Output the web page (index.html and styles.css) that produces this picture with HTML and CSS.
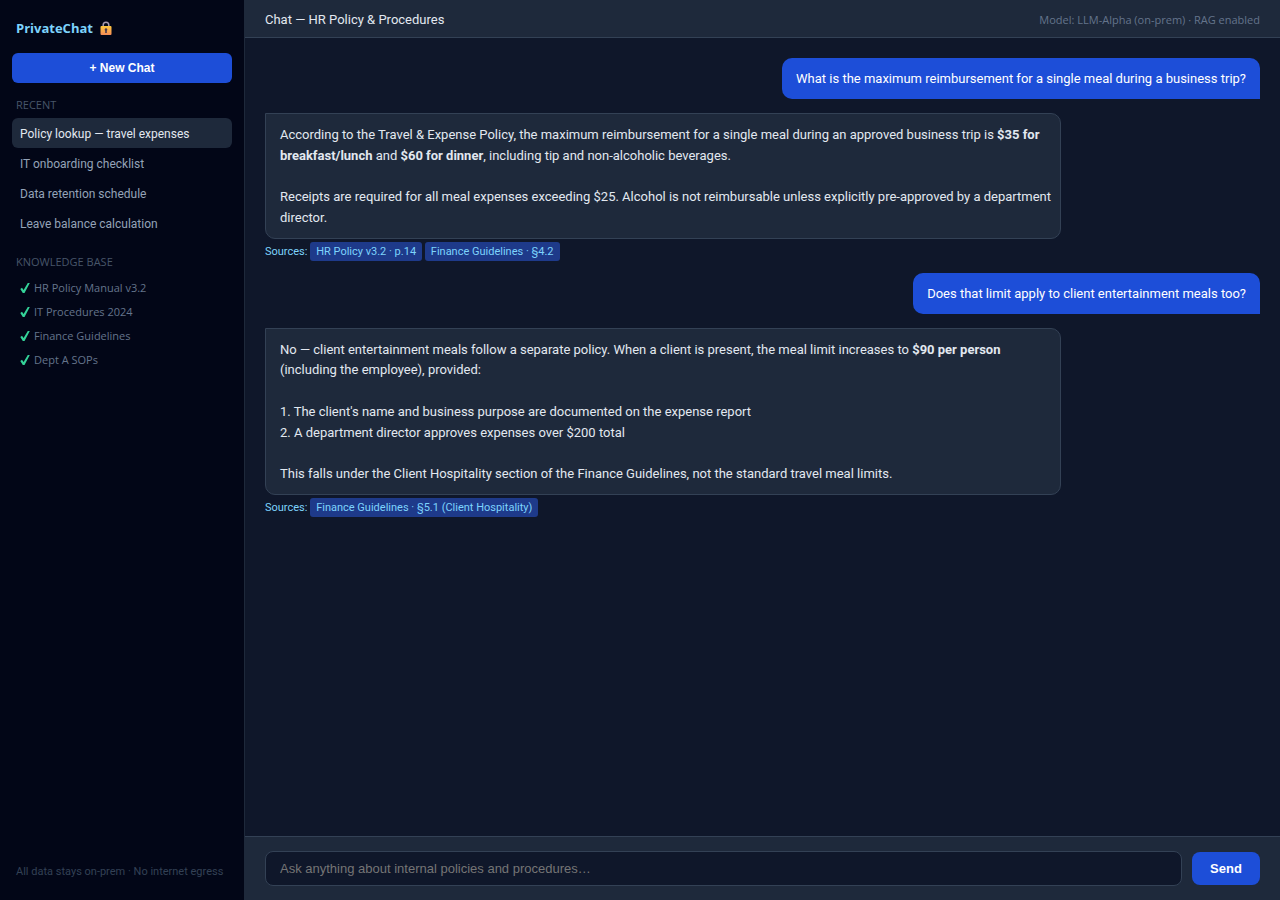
FILE: index.html
```html
<!DOCTYPE html>
<html lang="en">
<head>
    <meta charset="UTF-8">
    <meta name="viewport" content="width=device-width, initial-scale=1.0">
    <title>PrivateChat</title>
    <link rel="stylesheet" href="styles.css">
</head>
<body>
    <aside class="sidebar">
        <h1 class="logo">PrivateChat
            <svg class="lock" viewBox="0 0 14 16" aria-hidden="true">
                <defs>
                    <linearGradient id="lockBody" x1="0" y1="0" x2="0" y2="1">
                        <stop offset="0" stop-color="#ffc83d"/>
                        <stop offset="1" stop-color="#f58b57"/>
                    </linearGradient>
                </defs>
                <path d="M4.200 6V4a2.800 2.800 0 0 1 5.600 0v2" fill="none" stroke="#a79bb0" stroke-width="1.5"/>
                <rect x="1.5" y="5" width="11" height="9" rx="1" fill="url(#lockBody)"/>
                <path d="M7 7.200a1.400 1.400 0 0 1 .8 2.500V12H6.200V9.700A1.400 1.400 0 0 1 7 7.200z" fill="#4a3a4f"/>
            </svg>
        </h1>
        <button class="new-chat" type="button">+ New Chat</button>
        <h2 class="section-label">Recent</h2>
        <nav class="chats">
            <a class="chat-item active" href="#">Policy lookup — travel expenses</a>
            <a class="chat-item" href="#">IT onboarding checklist</a>
            <a class="chat-item" href="#">Data retention schedule</a>
            <a class="chat-item" href="#">Leave balance calculation</a>
        </nav>
        <h2 class="section-label kb-label">Knowledge Base</h2>
        <ul class="kb">
            <li><svg class="check" viewBox="0 0 10 12" aria-hidden="true"><path d="M.3 7L2 5.800l1.600 2.200L7.800.9h2L4.500 11H2.800z"/></svg>HR Policy Manual v3.2</li>
            <li><svg class="check" viewBox="0 0 10 12" aria-hidden="true"><path d="M.3 7L2 5.800l1.600 2.200L7.800.9h2L4.500 11H2.800z"/></svg>IT Procedures 2024</li>
            <li><svg class="check" viewBox="0 0 10 12" aria-hidden="true"><path d="M.3 7L2 5.800l1.600 2.200L7.800.9h2L4.500 11H2.800z"/></svg>Finance Guidelines</li>
            <li><svg class="check" viewBox="0 0 10 12" aria-hidden="true"><path d="M.3 7L2 5.800l1.600 2.200L7.800.9h2L4.500 11H2.800z"/></svg>Dept A SOPs</li>
        </ul>
        <p class="privacy">All data stays on-prem · No internet egress</p>
    </aside>

    <main class="main">
        <header class="topbar">
            <h2 class="title">Chat — HR Policy &amp; Procedures</h2>
            <span class="model">Model: LLM-Alpha (on-prem) · RAG enabled</span>
        </header>

        <div class="messages">
            <div class="bubble user">What is the maximum reimbursement for a single meal during a business trip?</div>
            <div class="reply">
                <div class="bubble bot">According to the Travel &amp; Expense Policy, the maximum reimbursement for a single meal during an approved business trip is <strong>$35 for breakfast/lunch</strong> and <strong>$60 for dinner</strong>, including tip and non-alcoholic beverages.<br><br>Receipts are required for all meal expenses exceeding $25. Alcohol is not reimbursable unless explicitly pre-approved by a department director.</div>
                <div class="sources">Sources: <span class="source">HR Policy v3.2 · p.14</span> <span class="source">Finance Guidelines · §4.2</span></div>
            </div>
            <div class="bubble user">Does that limit apply to client entertainment meals too?</div>
            <div class="reply">
                <div class="bubble bot">No — client entertainment meals follow a separate policy. When a client is present, the meal limit increases to <strong>$90 per person</strong> (including the employee), provided:<br><br>1. The client's name and business purpose are documented on the expense report<br>2. A department director approves expenses over $200 total<br><br>This falls under the Client Hospitality section of the Finance Guidelines, not the standard travel meal limits.</div>
                <div class="sources">Sources: <span class="source">Finance Guidelines · §5.1 (Client Hospitality)</span></div>
            </div>
        </div>

        <form class="composer">
            <input class="prompt" type="text" aria-label="Message" placeholder="Ask anything about internal policies and procedures…">
            <button class="send" type="button">Send</button>
        </form>
    </main>
</body>
</html>
```
FILE: styles.css
```css
* {
    box-sizing: border-box;
    margin: 0;
    padding: 0;
}
body {
    display: flex;
    height: 100vh;
    font-family: "Segoe UI", Roboto, sans-serif;
    font-size: 13px;
    background: #0f172a;
    color: #e2e8f0;
}
button, input {
    font-family: Arial, "Liberation Sans", sans-serif;
    font-size: 13px;
}
.logo, .section-label, .kb, .model {
    font-family: "Segoe UI", "Open Sans", sans-serif;
}
.sidebar {
    display: flex;
    flex-direction: column;
    flex-shrink: 0;
    width: 245px;
    padding: 16px 12px;
    background: #020617;
    border-right: 1px solid #1e293b;
}
.logo {
    display: flex;
    align-items: center;
    gap: 6px;
    padding: 0 4px;
    margin-bottom: 12px;
    font-size: 13px;
    line-height: 25px;
    color: #7dd3fc;
}
.lock {
    width: 14px;
    height: 16px;
}
.new-chat {
    height: 30px;
    border: none;
    border-radius: 6px;
    background: #1d4ed8;
    color: #fff;
    font-size: 12px;
    font-weight: bold;
    cursor: pointer;
}
.section-label {
    padding: 0 4px;
    margin: 14px 0 5px;
    font-size: 11px;
    font-weight: normal;
    line-height: 16px;
    text-transform: uppercase;
    color: #475569;
}
.kb-label {
    margin: 16px 0 6px;
}
.chat-item {
    display: block;
    padding: 7px 8px 5px;
    border-radius: 6px;
    font-size: 12px;
    line-height: 18px;
    color: #94a3b8;
    text-decoration: none;
}
.chat-item.active {
    background: #1e293b;
    color: #e2e8f0;
}
.kb {
    list-style: none;
}
.kb li {
    display: flex;
    align-items: center;
    gap: 4px;
    padding: 4px 8px;
    font-size: 11px;
    line-height: 16px;
    color: #64748b;
}
.check {
    width: 10px;
    height: 12px;
    fill: #34d399;
}
.privacy {
    margin-top: auto;
    padding: 4px 4px 3px;
    font-size: 11px;
    line-height: 18px;
    white-space: nowrap;
    color: #334155;
}
.main {
    display: flex;
    flex: 1;
    flex-direction: column;
    min-width: 0;
}
.topbar {
    display: flex;
    align-items: center;
    justify-content: space-between;
    padding: 11px 20px 9px;
    line-height: 17px;
    background: #1e293b;
    border-bottom: 1px solid #334155;
}
.title {
    font-size: 13px;
    font-weight: normal;
}
.model {
    font-size: 11px;
    color: #64748b;
}
.messages {
    display: flex;
    flex: 1;
    flex-direction: column;
    gap: 12px;
    padding: 20px;
    overflow-y: auto;
}
.bubble {
    padding: 11px 14px 9px;
    line-height: 1.6;
}
.user {
    align-self: flex-end;
    max-width: 80%;
    margin-bottom: 2px;
    border-radius: 10px 10px 0 10px;
    background: #1d4ed8;
    color: #fff;
}
.reply {
    max-width: 80%;
}
.bot {
    padding-right: 8px;
    border: 1px solid #334155;
    border-radius: 0 10px 10px 10px;
    background: #1e293b;
}
.sources {
    margin-top: 3px;
    font-size: 11px;
    line-height: 19px;
    color: #7dd3fc;
}
.source {
    display: inline-block;
    padding: 0 6px;
    border-radius: 3px;
    background: #1e3a8a;
}
.composer {
    display: flex;
    align-items: center;
    gap: 10px;
    padding: 14px 20px;
    background: #1e293b;
    border-top: 1px solid #334155;
}
.prompt {
    flex: 1;
    height: 35px;
    padding: 0 14px;
    border: 1px solid #334155;
    border-radius: 8px;
    background: #0f172a;
    color: #e2e8f0;
}
.prompt::placeholder {
    color: #757575;
}
.send {
    width: 68px;
    height: 33px;
    border: none;
    border-radius: 8px;
    background: #1d4ed8;
    color: #fff;
    font-weight: bold;
    cursor: pointer;
}
```
